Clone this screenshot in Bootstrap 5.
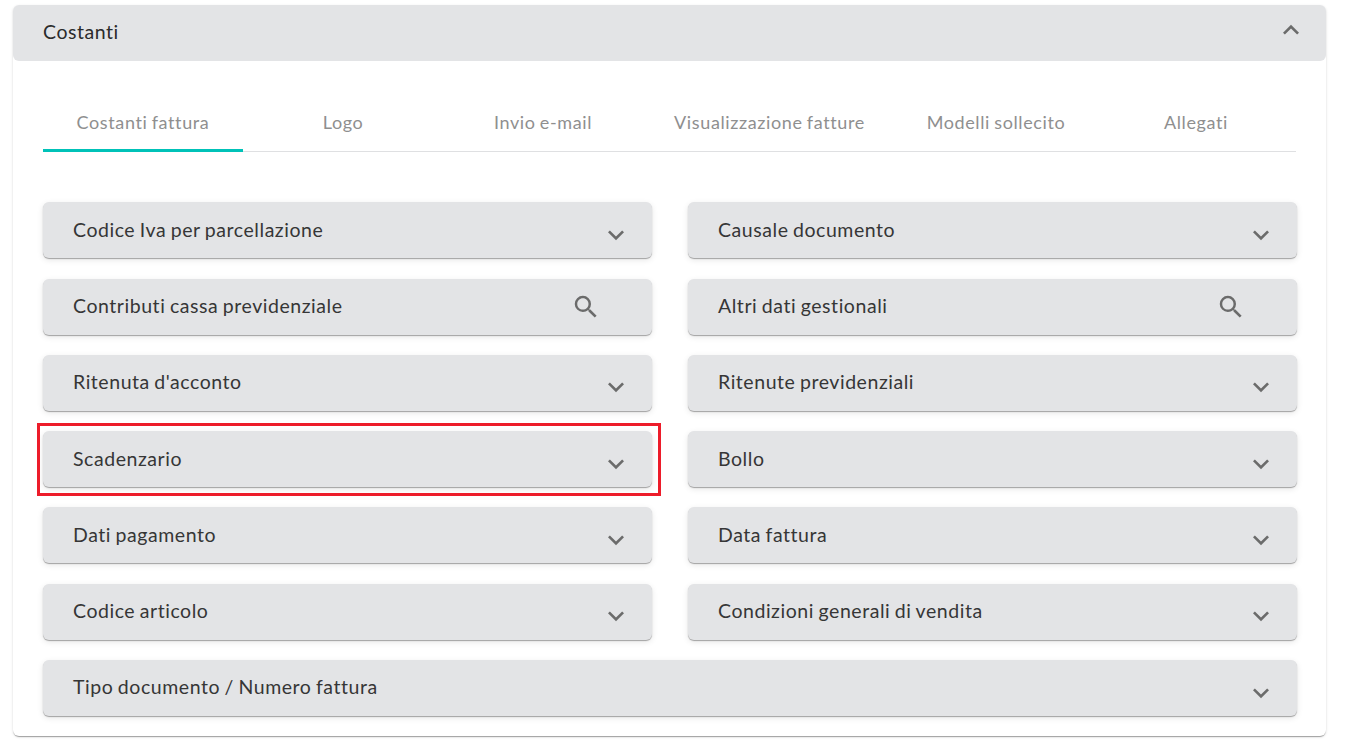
<!DOCTYPE html>
<html lang="it">
<head>
<meta charset="utf-8">
<title>Costanti</title>
<link href="https://cdn.jsdelivr.net/npm/bootstrap@5.3.0/dist/css/bootstrap.min.css" rel="stylesheet">
<style>
html,body{height:745px;overflow:hidden;background:#fff}
body{font-family:"Lato","Noto Sans",sans-serif;font-variant-ligatures:none;padding:5px 19px 0 13px}
.shell{width:1313px;height:731px;border:0;border-radius:6px;box-shadow:0 2px 1px -1px rgba(0,0,0,.2),0 1px 1px 0 rgba(0,0,0,.14),0 1px 3px 0 rgba(0,0,0,.12)}
.shell-head{height:56px;background:#e3e4e6;border-radius:6px;padding:0 19px 2px 30px;color:#2b2b2b;font-size:19.5px;letter-spacing:.55px;word-spacing:-1px}
.shell-head svg{margin-top:-4px}
.shell-body{padding:31px 30px 0}
.tabbar{height:60px;border-bottom:1px solid #dfe0e2;flex-wrap:nowrap}
.tabbar .nav-link{width:200px;height:60px;padding:0;border:0;color:#8f8f8f;font-size:18px;letter-spacing:.62px;word-spacing:-1px;border-radius:0;display:flex;align-items:center;justify-content:center}
.tabbar .nav-link.wide{width:253px}
.tabbar .nav-link.active{border-bottom:3px solid #00c2b8;height:60px;padding-top:3px}
.panels{--bs-gutter-x:36px;--bs-gutter-y:20.3px;margin-top:30px;width:1290px}
.fold{height:56px;background:#e3e4e6;border-radius:6px;padding:0 24px 2px 30px;color:#363636;font-size:19.5px;letter-spacing:.55px;word-spacing:-1px;box-shadow:0 1px 1px rgba(0,0,0,.32),0 2px 6px rgba(0,0,0,.1)}
.fold .chev{margin:11px -4px 0 0;flex:none}
.fold .lens{margin:3px 27px 0 0;flex:none}
.redbox{position:absolute;top:-8px;left:-6px;right:-9px;bottom:-9px;border:3px solid #ed1c2a;pointer-events:none}
</style>
</head>
<body>
<svg width="0" height="0" class="position-absolute">
<defs>
<symbol id="i-down" viewBox="0 0 24 24"><path d="M7.41 8.59 12 13.17l4.59-4.58L18 10l-6 6-6-6z"/></symbol>
<symbol id="i-up" viewBox="0 0 24 24"><path d="M7.41 15.41 12 10.83l4.59 4.58L18 14l-6-6-6 6z"/></symbol>
<symbol id="i-search" viewBox="0 0 24 24"><path d="M15.5 14h-.79l-.28-.27A6.47 6.47 0 0 0 16 9.5 6.5 6.5 0 1 0 9.5 16c1.61 0 3.09-.59 4.23-1.57l.27.28v.79l5 4.99L20.49 19l-4.99-5zm-6 0C7.01 14 5 11.99 5 9.5S7.01 5 9.5 5 14 7.01 14 9.5 11.99 14 9.5 14z"/></symbol>
</defs>
</svg>
<div class="card shell">
  <div class="shell-head d-flex align-items-center justify-content-between">
    <span>Costanti</span>
    <svg width="32" height="32" fill="#6b6b6b"><use href="#i-up"/></svg>
  </div>
  <div class="shell-body">
    <nav class="nav tabbar">
      <a class="nav-link active" href="#">Costanti fattura</a>
      <a class="nav-link" href="#">Logo</a>
      <a class="nav-link" href="#">Invio e-mail</a>
      <a class="nav-link wide" href="#">Visualizzazione fatture</a>
      <a class="nav-link" href="#">Modelli sollecito</a>
      <a class="nav-link" href="#">Allegati</a>
    </nav>
    <div class="row panels">
      <div class="col-6"><div class="fold d-flex align-items-center justify-content-between"><span>Codice Iva per parcellazione</span><svg class="chev" width="32" height="32" fill="#6b6b6b"><use href="#i-down"/></svg></div></div>
      <div class="col-6"><div class="fold d-flex align-items-center justify-content-between"><span>Causale documento</span><svg class="chev" width="32" height="32" fill="#6b6b6b"><use href="#i-down"/></svg></div></div>
      <div class="col-6"><div class="fold d-flex align-items-center justify-content-between"><span>Contributi cassa previdenziale</span><svg class="lens" width="30" height="30" fill="#6b6b6b"><use href="#i-search"/></svg></div></div>
      <div class="col-6"><div class="fold d-flex align-items-center justify-content-between"><span>Altri dati gestionali</span><svg class="lens" width="30" height="30" fill="#6b6b6b"><use href="#i-search"/></svg></div></div>
      <div class="col-6"><div class="fold d-flex align-items-center justify-content-between"><span>Ritenuta d'acconto</span><svg class="chev" width="32" height="32" fill="#6b6b6b"><use href="#i-down"/></svg></div></div>
      <div class="col-6"><div class="fold d-flex align-items-center justify-content-between"><span>Ritenute previdenziali</span><svg class="chev" width="32" height="32" fill="#6b6b6b"><use href="#i-down"/></svg></div></div>
      <div class="col-6"><div class="fold d-flex align-items-center justify-content-between position-relative"><span>Scadenzario</span><svg class="chev" width="32" height="32" fill="#6b6b6b"><use href="#i-down"/></svg><div class="redbox"></div></div></div>
      <div class="col-6"><div class="fold d-flex align-items-center justify-content-between"><span>Bollo</span><svg class="chev" width="32" height="32" fill="#6b6b6b"><use href="#i-down"/></svg></div></div>
      <div class="col-6"><div class="fold d-flex align-items-center justify-content-between"><span>Dati pagamento</span><svg class="chev" width="32" height="32" fill="#6b6b6b"><use href="#i-down"/></svg></div></div>
      <div class="col-6"><div class="fold d-flex align-items-center justify-content-between"><span>Data fattura</span><svg class="chev" width="32" height="32" fill="#6b6b6b"><use href="#i-down"/></svg></div></div>
      <div class="col-6"><div class="fold d-flex align-items-center justify-content-between"><span>Codice articolo</span><svg class="chev" width="32" height="32" fill="#6b6b6b"><use href="#i-down"/></svg></div></div>
      <div class="col-6"><div class="fold d-flex align-items-center justify-content-between"><span>Condizioni generali di vendita</span><svg class="chev" width="32" height="32" fill="#6b6b6b"><use href="#i-down"/></svg></div></div>
      <div class="col-12"><div class="fold d-flex align-items-center justify-content-between"><span>Tipo documento / Numero fattura</span><svg class="chev" width="32" height="32" fill="#6b6b6b"><use href="#i-down"/></svg></div></div>
    </div>
  </div>
</div>
</body>
</html>
